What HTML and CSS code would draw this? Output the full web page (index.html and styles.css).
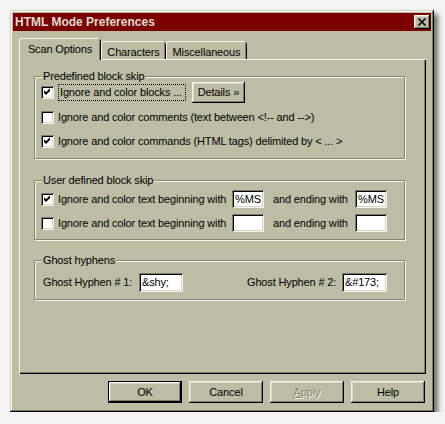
FILE: index.html
```html
<!DOCTYPE html>
<html>
<head>
<meta charset="utf-8">
<title>HTML Mode Preferences</title>
<link rel="stylesheet" href="styles.css">
</head>
<body>
<div class="window">
  <div class="titlebar">
    <span class="title">HTML Mode Preferences</span>
    <span class="close"><svg width="16" height="14" viewBox="0 0 16 14"><path d="M4.5 3.5 L11.5 10.5 M11.5 3.5 L4.5 10.5" stroke="#000" stroke-width="1.7" fill="none"/></svg></span>
  </div>
  <div class="content">
    <div class="tabs">
      <div class="tab active">Scan Options</div>
      <div class="tab t-chars">Characters</div>
      <div class="tab t-misc">Miscellaneous</div>
    </div>
    <div class="panel">
      <div class="group g1">
        <div class="legend">Predefined block skip</div>
        <div class="row row-first">
          <span class="check"><svg width="9" height="9" viewBox="0 0 9 9"><path d="M1 2.2 L3 4.2 L7 0.2 L7 3 L3 7 L1 5 Z" fill="#000"/></svg></span>
          <span class="focus">Ignore and color blocks ...</span>
          <span class="btn details">Details »</span>
        </div>
        <div class="row row-second">
          <span class="check"></span>
          <span class="text">Ignore and color comments (text between &lt;!-- and --&gt;)</span>
        </div>
        <div class="row">
          <span class="check"><svg width="9" height="9" viewBox="0 0 9 9"><path d="M1 2.2 L3 4.2 L7 0.2 L7 3 L3 7 L1 5 Z" fill="#000"/></svg></span>
          <span class="text">Ignore and color commands (HTML tags) delimited by &lt; ... &gt;</span>
        </div>
      </div>
      <div class="group g2">
        <div class="legend">User defined block skip</div>
        <div class="row">
          <span class="check"><svg width="9" height="9" viewBox="0 0 9 9"><path d="M1 2.2 L3 4.2 L7 0.2 L7 3 L3 7 L1 5 Z" fill="#000"/></svg></span>
          <span class="text lbl-begin">Ignore and color text beginning with</span>
          <input class="field f-short" value="%MS">
          <span class="text lbl-end">and ending with</span>
          <input class="field f-short" value="%MS">
        </div>
        <div class="row">
          <span class="check"></span>
          <span class="text lbl-begin">Ignore and color text beginning with</span>
          <input class="field f-short" value="">
          <span class="text lbl-end">and ending with</span>
          <input class="field f-short" value="">
        </div>
      </div>
      <div class="group g3">
        <div class="legend">Ghost hyphens</div>
        <div class="row row-ghost">
          <span class="text lbl-ghost1">Ghost Hyphen # 1:</span>
          <input class="field f-ghost1" value="&amp;shy;">
          <span class="text lbl-ghost2">Ghost Hyphen # 2:</span>
          <input class="field f-ghost2" value="&amp;#173;">
        </div>
      </div>
    </div>
    <div class="buttons">
      <span class="btn push default">OK</span>
      <span class="btn push">Cancel</span>
      <span class="btn push disabled"><u>A</u>pply</span>
      <span class="btn push">Help</span>
    </div>
  </div>
</div>
</body>
</html>
```
FILE: styles.css
```css
html, body {
  margin: 0;
  padding: 0;
  background: #f4f4f4;
}

body {
  font-family: "Liberation Sans", Arial, sans-serif;
  font-size: 11px;
  line-height: 13px;
  color: #000;
}

.window {
  margin: 10px 0 0 10px;
  width: 424px;
  height: 402px;
  box-sizing: border-box;
  padding: 3px;
  background: #bdbda5;
  box-shadow:
    inset -1px -1px 0 #000,
    inset 1px 1px 0 #d6d6c2,
    inset -2px -2px 0 #7e7e68,
    inset 2px 2px 0 #f6f6ea,
    4px 4px 5px rgba(0, 0, 0, 0.55);
}

.titlebar {
  height: 18px;
  background: #7b0000;
  display: flex;
  align-items: center;
  justify-content: space-between;
  padding: 0 1px 0 2px;
}

.title {
  font-weight: bold;
  font-size: 12px;
  line-height: 18px;
  color: #dedbcf;
}

.close {
  width: 16px;
  height: 14px;
  background: #bdbda5;
  box-shadow:
    inset -1px -1px 0 #000,
    inset 1px 1px 0 #f6f6ea,
    inset -2px -2px 0 #7e7e68,
    inset 2px 2px 0 #d6d6c2;
  display: flex;
}

.content {
  padding: 7px 5px 0 6px;
  letter-spacing: -0.15px;
}

.tabs {
  display: flex;
  align-items: flex-end;
  height: 22px;
  margin-bottom: -1px;
}

.tab {
  position: relative;
  box-sizing: border-box;
  height: 18px;
  margin-bottom: 1px;
  padding-top: 5px;
  text-align: center;
  background: #bdbda5;
  border-radius: 3px 3px 0 0;
  box-shadow:
    inset 1px 0 0 #f6f6ea,
    inset 0 1px 0 #f6f6ea,
    inset -1px 0 0 #000,
    inset -2px 0 0 #7e7e68;
}

.tab.active {
  z-index: 1;
  width: 82px;
  height: 22px;
  margin-bottom: 0;
}

.t-chars { width: 65px; }
.t-misc { width: 81px; }

.panel {
  box-sizing: border-box;
  width: 407px;
  height: 315px;
  padding: 17px 0 0 15px;
  box-shadow:
    inset 1px 1px 0 #f6f6ea,
    inset -1px -1px 0 #000,
    inset -2px -2px 0 #7e7e68;
}

.group {
  box-sizing: border-box;
  width: 371px;
  border: 1px solid #858570;
  box-shadow: inset 1px 1px 0 #f4f4e8, 1px 1px 0 #f4f4e8;
  padding: 0 6px;
}

.g1 { padding-bottom: 5px; }
.g2 { margin-top: 21px; padding-bottom: 4px; }
.g3 { margin-top: 20px; padding-bottom: 5px; }

.legend {
  width: fit-content;
  margin: -7px 0 0 1px;
  padding: 0 1px;
  background: #bdbda5;
}

.row {
  display: flex;
  align-items: center;
  height: 24px;
}

.row-first {
  height: 21px;
  margin-top: -1px;
}

.row-second {
  margin-top: 2px;
}

.row-ghost {
  margin-top: 3px;
}

.check {
  flex-shrink: 0;
  box-sizing: border-box;
  width: 13px;
  height: 13px;
  padding: 2px;
  background: #fff;
  box-shadow:
    inset 1px 1px 0 #7e7e68,
    inset -1px -1px 0 #f6f6ea,
    inset 2px 2px 0 #000,
    inset -2px -2px 0 #d6d6c2;
  display: flex;
}

.text {
  margin-left: 4px;
  white-space: nowrap;
}

.focus {
  margin-left: 4px;
  border: 1px dotted #000;
  padding: 1px 3px 1px 1px;
  white-space: nowrap;
}

.btn {
  box-sizing: border-box;
  display: flex;
  align-items: center;
  justify-content: center;
  background: #bdbda5;
  box-shadow:
    inset -1px -1px 0 #000,
    inset 1px 1px 0 #f6f6ea,
    inset -2px -2px 0 #7e7e68,
    inset 2px 2px 0 #d6d6c2;
}

.details {
  margin-left: 6px;
  width: 53px;
  height: 21px;
}

.lbl-begin { width: 174px; }
.lbl-end { margin-left: 9px; width: 82px; }
.lbl-ghost1 { margin-left: 2px; width: 96px; }
.lbl-ghost2 { margin-left: 64px; width: 95px; }

.field {
  box-sizing: border-box;
  height: 18px;
  margin: 0;
  padding: 0 0 0 3px;
  border: 0;
  outline: none;
  background: #fff;
  font-family: "Liberation Sans", Arial, sans-serif;
  font-size: 11px;
  letter-spacing: -0.15px;
  color: #000;
  flex-shrink: 0;
  box-shadow:
    inset 1px 1px 0 #7e7e68,
    inset -1px -1px 0 #f6f6ea,
    inset 2px 2px 0 #000,
    inset -2px -2px 0 #d6d6c2;
}

.f-short { width: 32px; }
.f-ghost1 { width: 44px; height: 19px; }
.f-ghost2 { width: 45px; height: 19px; }

.buttons {
  display: flex;
  justify-content: flex-end;
  gap: 7px;
  margin-top: 7px;
  padding-right: 1px;
}

.push {
  width: 74px;
  height: 22px;
}

.default {
  box-shadow:
    inset 0 0 0 1px #000,
    inset -2px -2px 0 #000,
    inset 2px 2px 0 #f6f6ea,
    inset -3px -3px 0 #7e7e68,
    inset 3px 3px 0 #d6d6c2;
}

.disabled {
  color: #858570;
  text-shadow: 1px 1px 0 #f6f6ea;
}
```
